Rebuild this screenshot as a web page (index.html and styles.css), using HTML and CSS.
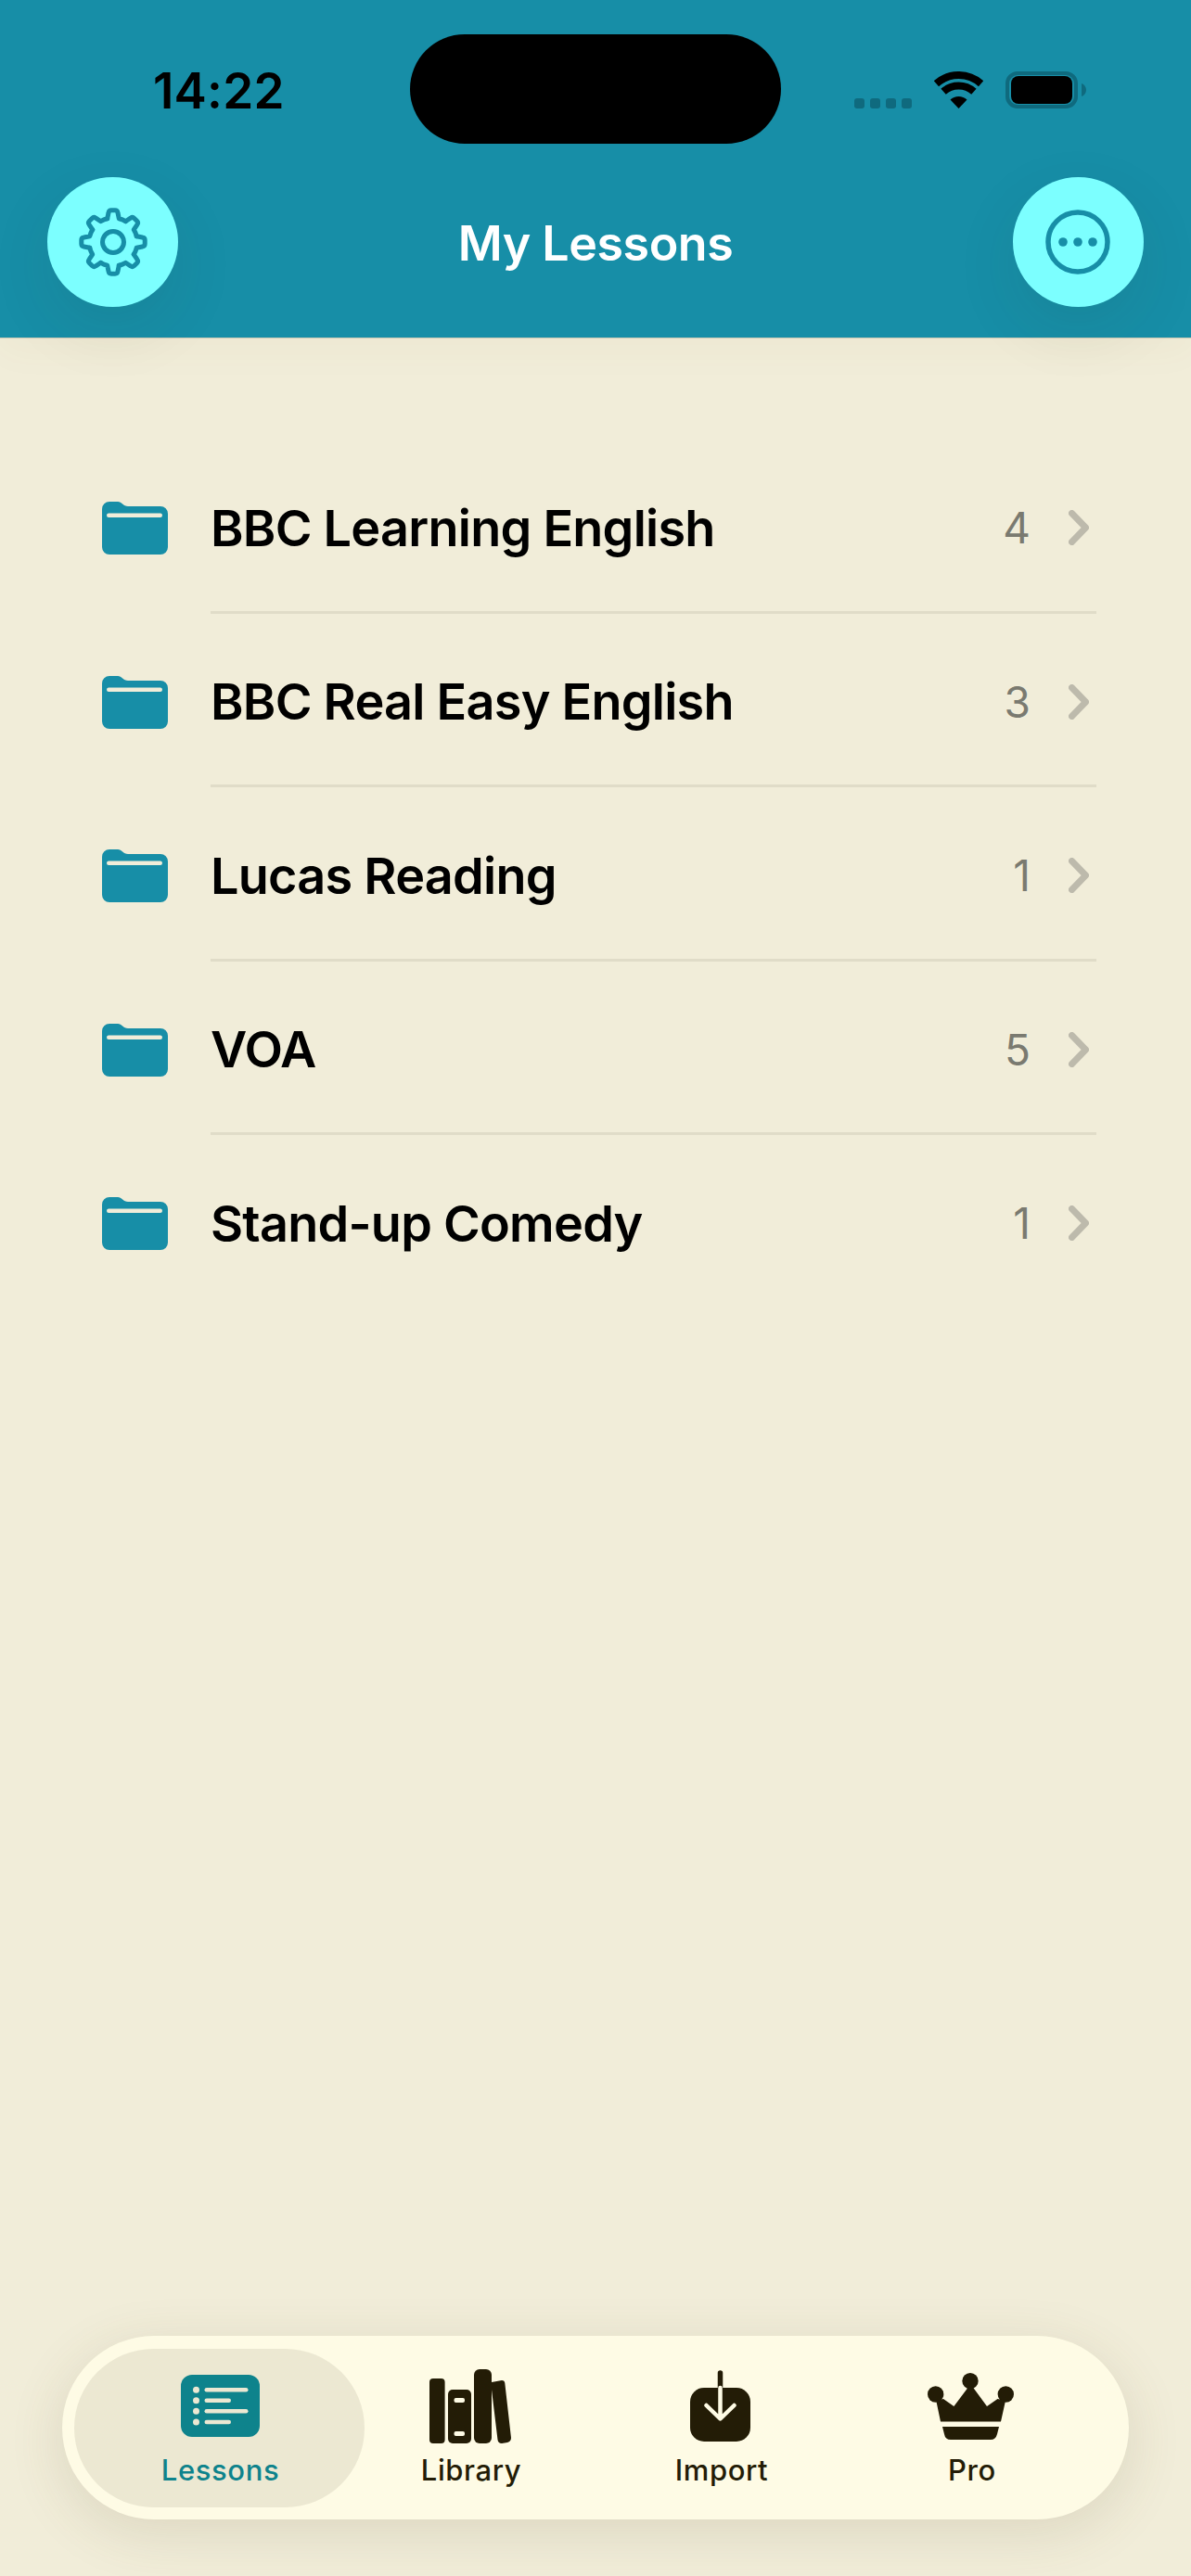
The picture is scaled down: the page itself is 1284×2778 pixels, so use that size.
FILE: index.html
```html
<!DOCTYPE html>
<html lang="en">
<head>
  <meta charset="UTF-8"/>
  <meta name="viewport" content="width=device-width, initial-scale=1.0"/>
  <title>My Lessons</title>
  <link rel="stylesheet" href="styles.css">
</head>
<body>

  <!-- Header with status bar -->
  <header class="header">
    <div class="status-bar">
      <div class="status-time">14:22</div>
      <div class="island"></div>
      <div class="status-icons">
        <div class="signal"><span></span><span></span><span></span><span></span></div>
        <svg class="wifi" width="53" height="40" viewBox="0 0 53 40">
          <path d="M2.4 13.25A36 36 0 0 1 50.6 13.25" fill="none" stroke="#000" stroke-width="8"/>
          <path d="M10.1 21.8A24.5 24.5 0 0 1 42.9 21.8" fill="none" stroke="#000" stroke-width="8"/>
          <path d="M26.5 40L17.5 30.5A13 13 0 0 1 35.5 30.5Z" fill="#000"/>
        </svg>
        <svg class="battery" width="87" height="40" viewBox="0 0 87 40">
          <rect x="2" y="2" width="74" height="36" rx="11" fill="none" stroke="#0f6a7e" stroke-width="4"/>
          <rect x="6" y="5" width="66" height="30" rx="8" fill="#000"/>
          <path d="M82 13C85 14 87 17 87 20C87 23 85 26 82 27Z" fill="#0f6a7e"/>
        </svg>
      </div>
    </div>

    <nav class="nav">
      <button class="round-btn">
        <svg width="74" height="74" viewBox="0 0 74 74" fill="none" stroke="#178ea7" stroke-width="5" stroke-linecap="round" stroke-linejoin="round">
          <path id="gearPart" d="M30.7 11.8L32 5.5Q32.4 2.8 35 2.8H39Q41.6 2.8 42 5.5L43.3 11.8A26 26 0 0 1 50.4 14.7"/>
          <use href="#gearPart" transform="rotate(45 37 37)"/>
          <use href="#gearPart" transform="rotate(90 37 37)"/>
          <use href="#gearPart" transform="rotate(135 37 37)"/>
          <use href="#gearPart" transform="rotate(180 37 37)"/>
          <use href="#gearPart" transform="rotate(225 37 37)"/>
          <use href="#gearPart" transform="rotate(270 37 37)"/>
          <use href="#gearPart" transform="rotate(315 37 37)"/>
          <circle cx="37" cy="37" r="11.5"/>
        </svg>
      </button>
      <h1 class="nav-title">My Lessons</h1>
      <button class="round-btn">
        <svg width="70" height="70" viewBox="0 0 70 70">
          <circle cx="35" cy="35" r="32" fill="none" stroke="#178ea7" stroke-width="5.5"/>
          <circle cx="19" cy="35" r="4.8" fill="#178ea7"/>
          <circle cx="35" cy="35" r="4.8" fill="#178ea7"/>
          <circle cx="51" cy="35" r="4.8" fill="#178ea7"/>
        </svg>
      </button>
    </nav>
  </header>

  <!-- Folder list -->
  <ul class="lessons">
    <li class="lesson-row">
      <svg class="folder" width="71" height="57" viewBox="0 0 71 57"><use href="#folderShape"/></svg>
      <div class="row-body">
        <span class="row-name">BBC Learning English</span>
        <span class="row-count">4</span>
        <svg class="chevron" width="22" height="38" viewBox="0 0 22 38"><path d="M3.5 3.5L18.5 19L3.5 34.5"/></svg>
      </div>
    </li>
    <li class="lesson-row">
      <svg class="folder" width="71" height="57" viewBox="0 0 71 57"><use href="#folderShape"/></svg>
      <div class="row-body">
        <span class="row-name">BBC Real Easy English</span>
        <span class="row-count">3</span>
        <svg class="chevron" width="22" height="38" viewBox="0 0 22 38"><path d="M3.5 3.5L18.5 19L3.5 34.5"/></svg>
      </div>
    </li>
    <li class="lesson-row">
      <svg class="folder" width="71" height="57" viewBox="0 0 71 57"><use href="#folderShape"/></svg>
      <div class="row-body">
        <span class="row-name">Lucas Reading</span>
        <span class="row-count">1</span>
        <svg class="chevron" width="22" height="38" viewBox="0 0 22 38"><path d="M3.5 3.5L18.5 19L3.5 34.5"/></svg>
      </div>
    </li>
    <li class="lesson-row">
      <svg class="folder" width="71" height="57" viewBox="0 0 71 57"><use href="#folderShape"/></svg>
      <div class="row-body">
        <span class="row-name">VOA</span>
        <span class="row-count">5</span>
        <svg class="chevron" width="22" height="38" viewBox="0 0 22 38"><path d="M3.5 3.5L18.5 19L3.5 34.5"/></svg>
      </div>
    </li>
    <li class="lesson-row last">
      <svg class="folder" width="71" height="57" viewBox="0 0 71 57"><use href="#folderShape"/></svg>
      <div class="row-body">
        <span class="row-name">Stand-up Comedy</span>
        <span class="row-count">1</span>
        <svg class="chevron" width="22" height="38" viewBox="0 0 22 38"><path d="M3.5 3.5L18.5 19L3.5 34.5"/></svg>
      </div>
    </li>
  </ul>

  <!-- Bottom tabs -->
  <div class="tabbar">
    <div class="tab active">
      <div class="tab-icon">
        <svg width="85" height="67" viewBox="0 0 85 67">
          <rect width="85" height="67" rx="12" fill="#0e838c"/>
          <g fill="#ece8d2">
            <circle cx="16.5" cy="16.3" r="3.5"/>
            <circle cx="16.5" cy="27.7" r="3.5"/>
            <circle cx="16.5" cy="39.3" r="3.5"/>
            <circle cx="16.5" cy="51" r="3.5"/>
            <rect x="25.5" y="14" width="47" height="4.6" rx="2.3"/>
            <rect x="25.5" y="25.4" width="28.5" height="4.6" rx="2.3"/>
            <rect x="25.5" y="37" width="47" height="4.6" rx="2.3"/>
            <rect x="25.5" y="48.7" width="28.5" height="4.6" rx="2.3"/>
          </g>
        </svg>
      </div>
      <span>Lessons</span>
    </div>
    <div class="tab">
      <div class="tab-icon">
        <svg width="88" height="80" viewBox="0 0 88 80" fill="#231c06">
          <rect x="0" y="10" width="16.6" height="70" rx="4"/>
          <rect x="20" y="22" width="25" height="58" rx="5"/>
          <rect x="48" y="0" width="19" height="80" rx="6"/>
          <path d="M67 14L78 12Q81 12 81.3 15L88 74Q88 78 84 79L78 80Q74 80 73.5 76L67 22Z"/>
          <rect x="26.5" y="31" width="11.5" height="5" rx="2" fill="#fefbe5"/>
          <rect x="26.5" y="67" width="11.5" height="5" rx="2" fill="#fefbe5"/>
        </svg>
      </div>
      <span>Library</span>
    </div>
    <div class="tab">
      <div class="tab-icon">
        <svg width="65" height="77" viewBox="0 0 65 77">
          <rect y="19" width="65" height="58" rx="15" fill="#231c06"/>
          <path d="M32.5 3V19" stroke="#231c06" stroke-width="5.5" stroke-linecap="round"/>
          <path d="M32.5 19V51M17.5 38L32.5 52.5L47.5 38" fill="none" stroke="#fefbe5" stroke-width="4.5" stroke-linecap="round" stroke-linejoin="round"/>
        </svg>
      </div>
      <span>Import</span>
    </div>
    <div class="tab">
      <div class="tab-icon">
        <svg width="93" height="72" viewBox="0 0 93 72" fill="#231c06">
          <circle cx="8.7" cy="23" r="8.7"/>
          <circle cx="46" cy="8.7" r="8.7"/>
          <circle cx="84.3" cy="23" r="8.7"/>
          <path d="M9.3 30L17 28L28.4 36L46.4 12L64 36L75.5 28L84 30L79 52.5H14Z"/>
          <path d="M16 58H77L75 66Q73.5 72 68 72H25Q19 72 18 66Z"/>
        </svg>
      </div>
      <span>Pro</span>
    </div>
  </div>

  <!-- shared folder shape -->
  <svg class="defs" width="0" height="0">
    <defs>
      <g id="folderShape">
        <path d="M8 0H17C21 0 23 5 28 5H63A8 8 0 0 1 71 13V49A8 8 0 0 1 63 57H8A8 8 0 0 1 0 49V8A8 8 0 0 1 8 0Z" fill="#178ea7"/>
        <rect x="5" y="12.5" width="60" height="4.5" rx="2.2" fill="#f1edd9"/>
      </g>
    </defs>
  </svg>

</body>
</html>
```

FILE: styles.css
```css
* {
  box-sizing: border-box;
}

body {
  font-family: 'Inter', 'Liberation Sans', sans-serif;
  margin: 0;
  width: 1284px;
  height: 2778px;
  overflow: hidden;
  display: flex;
  flex-direction: column;
  background-color: #f1edd9;
}

.header {
  position: relative;
  z-index: 2;
  height: 365px;
  padding-top: 37px;
  background-color: #178ea7;
  border-bottom: 1px solid #cfcbb6;
  box-shadow: 0 12px 40px rgba(120, 90, 40, 0.04);
}

.status-bar {
  display: flex;
  align-items: center;
  height: 118px;
}

.status-time {
  width: 442px;
  padding: 3px 0 0 165px;
  font-size: 53px;
  font-weight: 600;
  letter-spacing: 0.2px;
  color: #000;
}

.island {
  width: 400px;
  height: 118px;
  border-radius: 59px;
  background-color: #000;
}

.status-icons {
  display: flex;
  align-items: flex-end;
  height: 40px;
  margin-top: 2px;
  padding-left: 79px;
}

.signal {
  display: flex;
  gap: 6px;
  margin-right: 24px;
}

.signal span {
  width: 11px;
  height: 11px;
  border-radius: 3px;
  background-color: #0f6a7e;
}

.wifi {
  margin-right: 24px;
}

.nav {
  display: flex;
  justify-content: space-between;
  align-items: center;
  height: 140px;
  margin-top: 36px;
  padding: 0 51px;
}

.round-btn {
  width: 141px;
  height: 140px;
  padding: 0;
  border: none;
  border-radius: 50%;
  background-color: #7cffff;
  display: flex;
  align-items: center;
  justify-content: center;
  box-shadow: 0 24px 70px rgba(40, 50, 30, 0.09);
}

.nav-title {
  margin: 0;
  padding-top: 2px;
  font-size: 52px;
  font-weight: 580;
  letter-spacing: -0.5px;
  color: #fff;
}

.lessons {
  list-style: none;
  margin: 0;
  padding: 109px 0 0 110px;
}

.lesson-row {
  display: flex;
  align-items: center;
  height: 187.5px;
}

.folder {
  flex: none;
  margin-top: 4px;
}

.row-body {
  flex: 1;
  display: flex;
  align-items: center;
  height: 100%;
  margin: 0 102px 0 46px;
  padding: 6px 8px 0 0;
  border-bottom: 3px solid #e0dcc8;
}

.last .row-body {
  border-bottom-color: transparent;
}

.row-name {
  flex: 1;
  font-size: 54px;
  font-weight: 580;
  letter-spacing: -0.75px;
  color: #000;
}

.row-count {
  margin-right: 41px;
  font-size: 46px;
  color: #7a7a70;
}

.chevron {
  fill: none;
  stroke: #bdbaac;
  stroke-width: 7;
  stroke-linecap: round;
  stroke-linejoin: round;
}

.tabbar {
  display: grid;
  grid-template-columns: repeat(4, 270px);
  width: 1150px;
  height: 198px;
  margin: auto 0 61px 67px;
  padding: 14px 0 13px 36px;
  border-radius: 99px;
  background-color: #fefbe5;
  box-shadow: 0 14px 60px rgba(90, 80, 40, 0.14);
}

.tab {
  display: flex;
  flex-direction: column;
  align-items: center;
  font-size: 31px;
  font-weight: 500;
  letter-spacing: 0.6px;
  color: #231c06;
}

.tab-icon {
  height: 87px;
  margin: 18px 0 7px -3px;
  display: flex;
  align-items: center;
}

.tab.active {
  margin: 0 -20px 0 -23px;
  padding-left: 2px;
  border-radius: 86px;
  background-color: #ece8d2;
  color: #0e838c;
}

.tab.active .tab-icon {
  margin-left: 0;
}

.defs {
  position: absolute;
}
```
